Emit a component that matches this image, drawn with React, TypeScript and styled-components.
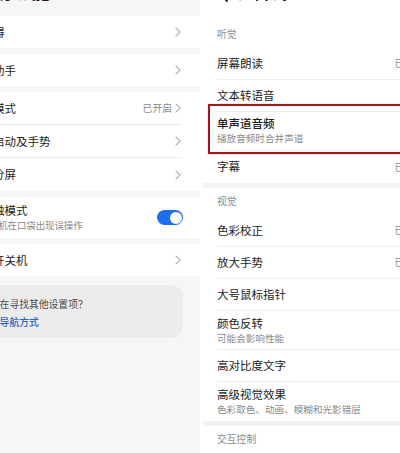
import React from "react";
import styled, { createGlobalStyle } from "styled-components";

const Global = createGlobalStyle`
  html, body { margin: 0; padding: 0; background: #ffffff; }
  body { font-family: "Noto Sans CJK SC", "Noto Sans", sans-serif; color: #1f1f1f; }
  * { box-sizing: border-box; }
`;

const Screen = styled.div`
  width: 400px;
  height: 453px;
  overflow: hidden;
  display: flex;
  background: #ffffff;
`;

/* ---------- left phone ---------- */
const LeftPanel = styled.div`
  flex: 0 0 200px;
  height: 453px;
  overflow: hidden;
  background: #f6f6f6;
`;

const LeftColumn = styled.div`
  margin-left: -44px;
  width: 260px;
  display: flex;
  flex-direction: column;
  gap: 6px;
`;

const LeftTitle = styled.div`
  height: 10px;
  padding-left: 18px;
  font-size: 19px;
  line-height: 20px;
  font-weight: 700;
  color: #1a1a1a;
  & > span { display: block; margin-top: -19px; }
`;

const Card = styled.div`
  background: #ffffff;
  border-radius: 12px;
  display: flex;
  flex-direction: column;
`;

const LRow = styled.div<{ $h: number }>`
  height: ${(p) => p.$h}px;
  padding-left: 14px;
  display: flex;
`;

const LRowBody = styled.div<{ $divider?: boolean }>`
  flex: 1;
  display: flex;
  align-items: center;
  border-bottom: ${(p) => (p.$divider ? "1px solid #ececec" : "none")};
  margin-right: 34px;
  padding-right: 1px;
`;

const LText = styled.div`
  flex: 1;
  display: flex;
  flex-direction: column;
`;

const LLabel = styled.div`
  font-size: 11.5px;
  line-height: 15px;
  color: #1c1c1c;
`;

const LSub = styled.div`
  font-size: 9.4px;
  line-height: 14px;
  color: #8a8a8a;
`;

const Value = styled.span`
  font-size: 9.8px;
  color: #8a8a8a;
  margin-right: 3px;
  white-space: nowrap;
`;

const Toggle = styled.div`
  width: 26px;
  height: 15px;
  border-radius: 8px;
  background: #1d6ff0;
  position: relative;
  margin-right: -2px;
  &::after {
    content: "";
    position: absolute;
    right: 1.5px;
    top: 1.5px;
    width: 12px;
    height: 12px;
    border-radius: 50%;
    background: #fff;
  }
`;

const SuggestCard = styled.div`
  margin-top: 3px;
  margin-right: 33px;
  height: 53px;
  border-radius: 12px;
  background: #ececec;
  padding: 12px 0 0 24px;
  display: flex;
  flex-direction: column;
  gap: 4px;
`;

const SuggestTitle = styled.div`
  font-size: 9.8px;
  line-height: 14px;
  color: #4a4a4a;
  white-space: nowrap;
`;

const SuggestLink = styled.div`
  font-size: 9.8px;
  line-height: 14px;
  color: #2a62c9;
  font-weight: 500;
  white-space: nowrap;
`;

/* ---------- right phone ---------- */
const RightPanel = styled.div`
  flex: 0 0 244px;
  margin-left: 3px;
  background: #ffffff;
  display: flex;
  flex-direction: column;
`;

const Header = styled.div`
  height: 21px;
  padding-left: 16px;
  display: flex;
  align-items: flex-start;
  gap: 9px;
`;

const BackIcon = styled.svg`
  margin-top: -12px;
  width: 10px;
  height: 14px;
`;

const HeaderTitle = styled.div`
  margin-top: -17px;
  font-size: 17px;
  line-height: 18px;
  font-weight: 700;
  color: #1a1a1a;
`;

const SectionLabel = styled.div`
  height: 28px;
  padding-left: 14px;
  display: flex;
  align-items: center;
  font-size: 9.8px;
  color: #8c8c8c;
`;

const Band = styled.div`
  height: 5px;
  background: #f2f2f2;
`;

const RRow = styled.div<{ $h: number; $highlight?: boolean }>`
  height: ${(p) => p.$h}px;
  padding-left: 14px;
  display: flex;
  position: relative;
  ${(p) =>
    p.$highlight
      ? `&::after {
    content: "";
    position: absolute;
    top: -8px;
    bottom: -3px;
    left: 5px;
    right: -20px;
    border: 2.5px solid #a5161c;
    box-shadow: 0 0 1px rgba(165,22,28,0.5);
    pointer-events: none;
  }`
      : ""}
`;

const RRowBody = styled.div<{ $divider?: boolean }>`
  flex: 1;
  display: flex;
  align-items: center;
  padding-right: 14px;
  border-bottom: ${(p) => (p.$divider ? "1px solid #ededed" : "none")};
`;

const RLabel = styled.div<{ $strong?: boolean }>`
  font-size: 11.5px;
  line-height: 15px;
  color: #1c1c1c;
  font-weight: ${(p) => (p.$strong ? 500 : 400)};
`;

const RSub = styled.div`
  font-size: 9.6px;
  line-height: 14px;
  color: #8a8a8a;
  white-space: nowrap;
`;

const Chevron = () => (
  <svg width="6" height="10" viewBox="0 0 6 10">
    <polyline points="1,1 5,5 1,9" fill="none" stroke="#b4b4b4" strokeWidth="1.1" strokeLinecap="round" strokeLinejoin="round" />
  </svg>
);

type LItem = { label: string; sub?: string; value?: string; toggle?: boolean; h: number };

const leftCards: LItem[][] = [
  [{ label: "无障碍", h: 32 }],
  [{ label: "语音助手", h: 32 }],
  [
    { label: "单手模式", value: "已开启", h: 33 },
    { label: "快捷启动及手势", h: 33 },
    { label: "智慧分屏", h: 33 },
  ],
  [{ label: "防误触模式", sub: "防止手机在口袋出现误操作", toggle: true, h: 41 }],
  [{ label: "定时开关机", h: 32 }],
];

type RItem = { label: string; sub?: string; value?: string; highlight?: boolean };

const hearing: RItem[] = [
  { label: "屏幕朗读", value: "已开启" },
  { label: "文本转语音" },
  { label: "单声道音频", sub: "播放音频时合并声道", highlight: true },
  { label: "字幕", value: "已关闭" },
];

const vision: RItem[] = [
  { label: "色彩校正", value: "已关闭" },
  { label: "放大手势", value: "已关闭" },
  { label: "大号鼠标指针" },
  { label: "颜色反转", sub: "可能会影响性能" },
  { label: "高对比度文字" },
  { label: "高级视觉效果", sub: "色彩取色、动画、模糊和光影错层" },
];

const RightRows = ({ items }: { items: RItem[] }) => (
  <>
    {items.map((it, i) => (
      <RRow key={it.label} $h={it.sub ? 40 : 33} $highlight={it.highlight}>
        <RRowBody $divider={i < items.length - 1}>
          <LText>
            <RLabel $strong={it.highlight}>{it.label}</RLabel>
            {it.sub && <RSub>{it.sub}</RSub>}
          </LText>
          {it.value && <Value>{it.value}</Value>}
          {it.value && <Chevron />}
        </RRowBody>
      </RRow>
    ))}
  </>
);

export default function App() {
  return (
    <Screen>
      <Global />
      <LeftPanel>
        <LeftColumn>
          <LeftTitle>
            <span>辅助功能</span>
          </LeftTitle>
          {leftCards.map((card, ci) => (
            <Card key={ci}>
              {card.map((it, i) => (
                <LRow key={it.label} $h={it.h}>
                  <LRowBody $divider={i < card.length - 1}>
                    <LText>
                      <LLabel>{it.label}</LLabel>
                      {it.sub && <LSub>{it.sub}</LSub>}
                    </LText>
                    {it.value && <Value>{it.value}</Value>}
                    {it.toggle ? <Toggle /> : <Chevron />}
                  </LRowBody>
                </LRow>
              ))}
            </Card>
          ))}
          <SuggestCard>
            <SuggestTitle>是否在寻找其他设置项？</SuggestTitle>
            <SuggestLink>系统导航方式</SuggestLink>
          </SuggestCard>
        </LeftColumn>
      </LeftPanel>
      <RightPanel>
        <Header>
          <BackIcon viewBox="0 0 10 14">
            <polyline points="8,1 2,7 8,13" fill="none" stroke="#1a1a1a" strokeWidth="1.8" strokeLinecap="round" strokeLinejoin="round" />
          </BackIcon>
          <HeaderTitle>无障碍</HeaderTitle>
        </Header>
        <SectionLabel>听觉</SectionLabel>
        <RightRows items={hearing} />
        <Band />
        <SectionLabel>视觉</SectionLabel>
        <RightRows items={vision} />
        <Band />
        <SectionLabel>交互控制</SectionLabel>
      </RightPanel>
    </Screen>
  );
}
